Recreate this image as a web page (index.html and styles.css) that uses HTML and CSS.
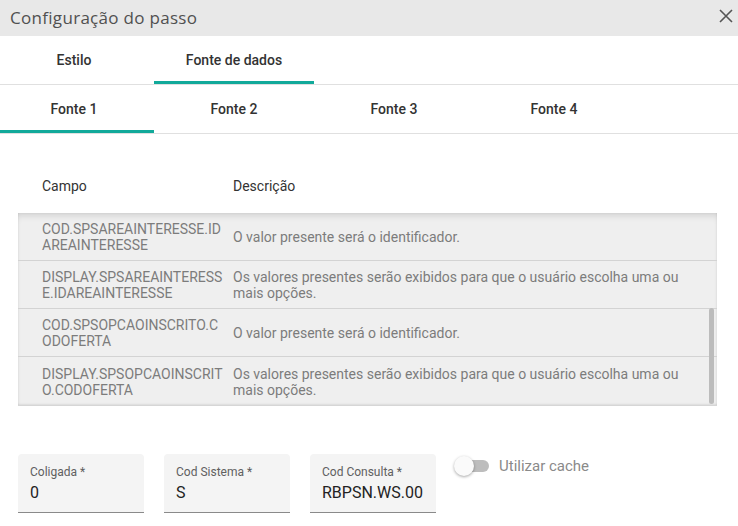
FILE: index.html
```html
<!DOCTYPE html>
<html lang="pt">
<head>
<meta charset="utf-8">
<link rel="stylesheet" href="styles.css">
</head>
<body>
<div class="dialog">
  <header class="dlg-head">
    <h1 class="dlg-title">Configuração do passo</h1>
    <button class="close" aria-label="Fechar">
      <svg width="14" height="14" viewBox="0 0 14 14"><path d="M1 1L13 13M13 1L1 13" stroke="#555" stroke-width="1.6" fill="none"/></svg>
    </button>
  </header>
  <nav class="tabs">
    <div class="tab">Estilo</div>
    <div class="tab active">Fonte de dados</div>
  </nav>
  <nav class="tabs">
    <div class="tab active">Fonte 1</div>
    <div class="tab">Fonte 2</div>
    <div class="tab">Fonte 3</div>
    <div class="tab">Fonte 4</div>
  </nav>
  <section class="content">
    <div class="thead">
      <div class="c1">Campo</div>
      <div class="c2">Descrição</div>
    </div>
    <div class="tbody">
      <div class="row"><div class="c1">COD.SPSAREAINTERESSE.IDAREAINTERESSE</div><div class="c2">O valor presente será o identificador.</div></div>
      <div class="row"><div class="c1">DISPLAY.SPSAREAINTERESSE.IDAREAINTERESSE</div><div class="c2">Os valores presentes serão exibidos para que o usuário escolha uma ou mais opções.</div></div>
      <div class="row"><div class="c1">COD.SPSOPCAOINSCRITO.CODOFERTA</div><div class="c2">O valor presente será o identificador.</div></div>
      <div class="row"><div class="c1">DISPLAY.SPSOPCAOINSCRITO.CODOFERTA</div><div class="c2">Os valores presentes serão exibidos para que o usuário escolha uma ou mais opções.</div></div>
      <div class="scrollbar"></div>
    </div>
    <div class="form">
      <label class="field"><span class="lbl">Coligada *</span><span class="val">0</span></label>
      <label class="field"><span class="lbl">Cod Sistema *</span><span class="val">S</span></label>
      <label class="field"><span class="lbl">Cod Consulta *</span><span class="val">RBPSN.WS.00</span></label>
      <div class="toggle"><span class="track"><span class="knob"></span></span><span class="tlabel">Utilizar cache</span></div>
    </div>
  </section>
</div>
</body>
</html>
```
FILE: styles.css
```css
* { box-sizing: border-box; }
html, body { margin: 0; padding: 0; background: #fff; }
body { font-family: Roboto, "Liberation Sans", sans-serif; width: 738px; height: 526px; overflow: hidden; }
.dialog { width: 738px; }
.dlg-head {
  height: 36px; background: #e8e8e8;
  display: flex; align-items: center; justify-content: space-between;
  padding: 0 2px 0 10px;
}
.dlg-title {
  margin: 0 0 2px; font-family: "Open Sans", sans-serif; font-weight: 400;
  font-size: 17px; color: #505050; letter-spacing: 0.3px;
}
.close { border: 0; background: none; padding: 0; width: 20px; height: 20px; display: flex; align-items: center; justify-content: center; margin-top: -4px; }
.tabs {
  display: flex; height: 49px; border-bottom: 1px solid #e0e0e0;
  margin-left: -6px; overflow: hidden;
}
.tab {
  width: 160px; display: flex; align-items: center; justify-content: center;
  font-size: 14px; font-weight: 500; color: #333; position: relative;
}
.tab.active::after {
  content: ""; position: absolute; left: 0; right: 0; bottom: 0; height: 3px; background: #11a99a;
}
.content { padding: 0 21px 0 18px; }
.thead {
  display: flex; margin-top: 44px; height: 35px; font-size: 14px; color: #333;
}
.thead .c1 { width: 215px; padding-left: 24px; }
.thead .c2 { flex: 1; }
.tbody {
  position: relative; background: #efefef;
  box-shadow: inset 0 7px 8px -6px rgba(0,0,0,0.18), inset 0 -2px 3px -2px rgba(0,0,0,0.15), inset -2px 0 3px -2px rgba(0,0,0,0.1), inset 2px 0 3px -2px rgba(0,0,0,0.1);
  border-bottom: 1px solid #d6d6d6;
}
.row {
  display: flex; align-items: center; min-height: 48px; padding-top: 1px;
  border-bottom: 1px solid #d3d3d3; font-size: 14px; color: #7c7c7c; line-height: 16px;
}
.row:nth-child(4) { border-bottom: 0; }
.row .c1 { width: 215px; padding-left: 24px; padding-right: 10px; word-break: break-all; }
.row .c2 { flex: 1; padding-right: 30px; }
.scrollbar {
  position: absolute; right: 3px; top: 95px; width: 5px; height: 96px;
  background: #bcbcbc; border-radius: 3px;
}
.form { display: flex; margin-top: 48px; gap: 20px; }
.field {
  width: 126px; height: 59px; background: #f4f4f4; border-radius: 4px 4px 0 0;
  border-bottom: 1px solid #8a8a8a; display: flex; flex-direction: column;
  padding: 11px 12px 0;
}
.lbl { font-size: 12px; color: #606060; line-height: 14px; }
.val { font-size: 16px; color: #222; margin-top: 4px; line-height: 20px; }
.toggle { display: flex; align-items: flex-start; margin-left: -1px; padding-top: 4px; }
.track {
  width: 34px; height: 12px; background: #bdbdbd; border-radius: 6px; position: relative; margin-top: 2px;
}
.knob {
  position: absolute; left: -1px; top: -4px; width: 20px; height: 20px; border-radius: 50%;
  background: #fafafa; box-shadow: 0 1px 3px rgba(0,0,0,0.35);
}
.tlabel { margin-left: 10px; font-size: 15px; color: #8a8a8a; line-height: 16px; margin-top: 0; }
```
